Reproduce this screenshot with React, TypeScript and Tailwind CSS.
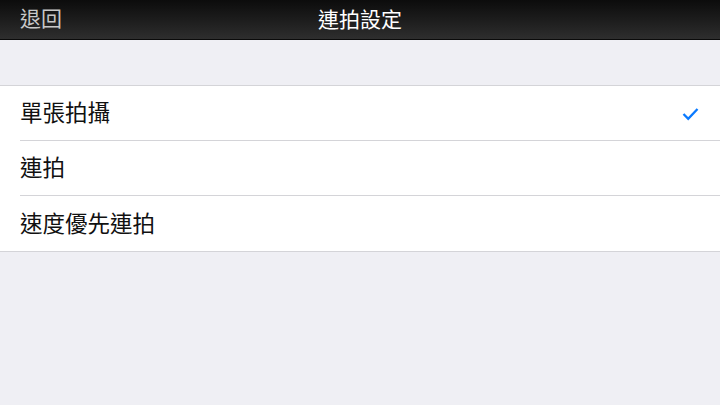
const font = { fontFamily: '"Noto Sans CJK TC", "Noto Sans", sans-serif' }

const rows = [
  { label: '單張拍攝', checked: true },
  { label: '連拍', checked: false },
  { label: '速度優先連拍', checked: false },
]

export default function App() {
  return (
    <div className="w-[720px] h-[405px] bg-[#efeff4] overflow-hidden" style={font}>
      <div className="relative h-[40px] flex items-center justify-center bg-gradient-to-b from-[#0c0c0c] to-[#2e2e2e] border-b border-[#0a0a0a]">
        <span className="absolute left-[20px] top-[3px] text-[21px] leading-[28px] text-[#c8c8c8]">退回</span>
        <span className="relative -top-[2px] text-[21px] leading-[28px] text-white">連拍設定</span>
      </div>
      <div className="h-[45px]" />
      <div className="bg-white border-t border-b border-[#d4d4d8]">
        {rows.map((r, i) => (
          <div key={r.label} className="pl-[20px]">
            <div
              className={`h-[55px] flex items-center pr-[20px] ${i < rows.length - 1 ? 'border-b border-[#d4d4d8]' : ''}`}
            >
              <span className="relative -top-[2px] flex-1 text-[22.5px] leading-[28px] text-[#111]">{r.label}</span>
              {r.checked && (
                <svg width="17" height="14" viewBox="0 0 17 14" className="mr-[1px] mt-[1px]">
                  <path d="M1.5 7 L6.2 11.8 L15.5 2" fill="none" stroke="#0a7aff" strokeWidth="2.3" />
                </svg>
              )}
            </div>
          </div>
        ))}
      </div>
    </div>
  )
}
